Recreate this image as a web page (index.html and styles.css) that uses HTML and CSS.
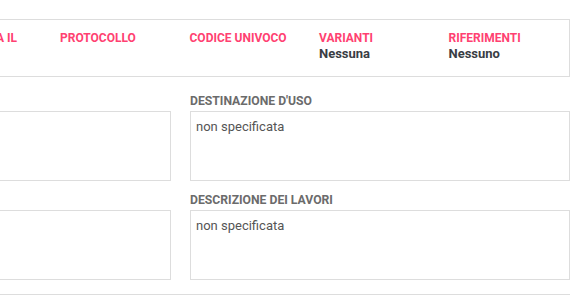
FILE: index.html
```html
<!DOCTYPE html>
<html lang="it">
<head>
<meta charset="utf-8">
<title>Dettaglio pratica</title>
<link rel="stylesheet" href="styles.css">
</head>
<body>
<div class="page">
  <div class="info">
    <div class="info-col">
      <div class="info-label">TIPO PRATICA</div>
      <div class="info-value">Edilizia</div>
    </div>
    <div class="info-col">
      <div class="info-label">PRESENTATA IL ESERCIZIO</div>
    </div>
    <div class="info-col">
      <div class="info-label">PROTOCOLLO</div>
    </div>
    <div class="info-col">
      <div class="info-label">CODICE UNIVOCO</div>
    </div>
    <div class="info-col">
      <div class="info-label">VARIANTI</div>
      <div class="info-value">Nessuna</div>
    </div>
    <div class="info-col">
      <div class="info-label">RIFERIMENTI</div>
      <div class="info-value">Nessuno</div>
    </div>
  </div>

  <div class="fields">
    <div class="field">
      <div class="field-label">UBICAZIONE</div>
      <div class="field-box"></div>
    </div>
    <div class="field">
      <div class="field-label">DESTINAZIONE D'USO</div>
      <div class="field-box">non specificata</div>
    </div>
    <div class="field">
      <div class="field-label">NOTE</div>
      <div class="field-box"></div>
    </div>
    <div class="field">
      <div class="field-label">DESCRIZIONE DEI LAVORI</div>
      <div class="field-box">non specificata</div>
    </div>
  </div>

  <div class="next-box"></div>
</div>
</body>
</html>
```

FILE: styles.css
```css
html, body {
  margin: 0;
  padding: 0;
  background: #ffffff;
  overflow: hidden;
}

body {
  font-family: Roboto, "Liberation Sans", Arial, sans-serif;
}

.page {
  margin-left: -209px;
  width: 779px;
  padding-top: 19px;
}

.info {
  display: grid;
  grid-template-columns: repeat(6, 1fr);
  border: 1px solid #dddddd;
  padding: 10px 0 14px;
}

.info-col {
  padding: 0 9px;
  line-height: 16px;
  font-weight: 700;
}

.info-label {
  font-size: 12px;
  color: #ff4171;
}

.info-value {
  font-size: 13px;
  color: #393d44;
}

.fields {
  display: grid;
  grid-template-columns: 380px 380px;
  column-gap: 19px;
  row-gap: 11px;
  margin-top: 16px;
}

.field-label {
  font-size: 12.2px;
  font-weight: 700;
  line-height: 16px;
  color: #6b6b6b;
  margin-bottom: 2px;
}

.field-box {
  box-sizing: border-box;
  height: 70px;
  border: 1px solid #dddddd;
  padding: 6px 5px 5px;
  font-size: 13px;
  line-height: 18px;
  color: #555555;
}

.next-box {
  margin-top: 14px;
  height: 40px;
  border-top: 1px solid #dddddd;
}
```
